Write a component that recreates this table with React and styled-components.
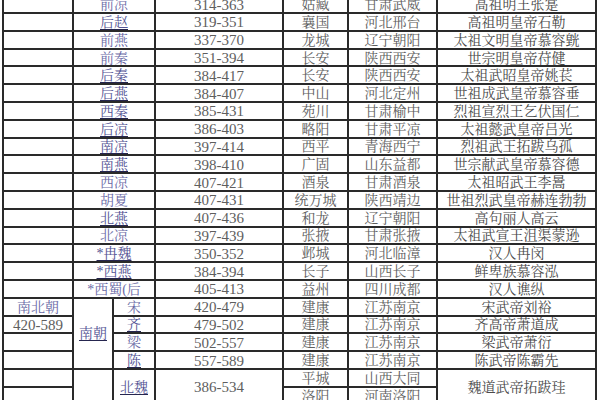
import React from "react";
import styled, { createGlobalStyle } from "styled-components";

const Global = createGlobalStyle`
  html, body { margin: 0; padding: 0; overflow: hidden; background: #fff; }
  body { width: 600px; height: 400px; }
`;

const Sheet = styled.div`
  display: grid;
  grid-template-columns: 70px 40px 42px 128px 65px 89px 159px;
  grid-auto-rows: 17.8px;
  margin: -3.8px 0 0 2px;
  width: max-content;
  border-left: 2px solid #2a2a2a;
  font-family: "Liberation Serif", "Noto Serif CJK SC", "Noto Sans CJK SC", serif;
  font-size: 14px;
`;

const Cell = styled.div`
  box-sizing: border-box;
  border-right: 2px solid #2a2a2a;
  border-bottom: 2px solid #2a2a2a;
  padding-top: 2px;
  display: flex;
  align-items: center;
  justify-content: center;
  white-space: nowrap;
  line-height: 1;
  color: ${(p) => (p.$tone === "dark" ? "#4a4a4a" : "#5e5e5e")};
  font-size: ${(p) => (p.$num ? "15px" : "14px")};
  grid-column: span ${(p) => p.$cols || 1};
  grid-row: span ${(p) => p.$rows || 1};
`;

const Name = styled.span`
  color: ${(p) => (p.$u ? "#545494" : "#6a6aa6")};
  text-decoration: ${(p) => (p.$u ? "underline" : "none")};
  text-decoration-color: #26264f;
  text-decoration-thickness: 1px;
  text-underline-offset: 2px;
`;

const kingdoms = [
  ["前凉", 0, "314-363", "姑臧", "甘肃武威", "高祖明王张寔"],
  ["后赵", 1, "319-351", "襄国", "河北邢台", "高祖明皇帝石勒"],
  ["前燕", 0, "337-370", "龙城", "辽宁朝阳", "太祖文明皇帝慕容皝"],
  ["前秦", 0, "351-394", "长安", "陕西西安", "世宗明皇帝苻健"],
  ["后秦", 1, "384-417", "长安", "陕西西安", "太祖武昭皇帝姚苌"],
  ["后燕", 1, "384-407", "中山", "河北定州", "世祖成武皇帝慕容垂"],
  ["西秦", 1, "385-431", "苑川", "甘肃榆中", "烈祖宣烈王乞伏国仁"],
  ["后凉", 1, "386-403", "略阳", "甘肃平凉", "太祖懿武皇帝吕光"],
  ["南凉", 1, "397-414", "西平", "青海西宁", "烈祖武王拓跋乌孤"],
  ["南燕", 1, "398-410", "广固", "山东益都", "世宗献武皇帝慕容德"],
  ["西凉", 0, "407-421", "酒泉", "甘肃酒泉", "太祖昭武王李暠"],
  ["胡夏", 0, "407-431", "统万城", "陕西靖边", "世祖烈武皇帝赫连勃勃"],
  ["北燕", 1, "407-436", "和龙", "辽宁朝阳", "高句丽人高云"],
  ["北凉", 0, "397-439", "张掖", "甘肃张掖", "太祖武宣王沮渠蒙逊"],
  ["*冉魏", 1, "350-352", "邺城", "河北临漳", "汉人冉闵"],
  ["*西燕", 1, "384-394", "长子", "山西长子", "鲜卑族慕容泓"],
  ["*西蜀(后", 0, "405-413", "益州", "四川成都", "汉人谯纵"],
];

const south = [
  ["宋", 0, "420-479", "宋武帝刘裕"],
  ["齐", 1, "479-502", "齐高帝萧道成"],
  ["梁", 0, "502-557", "梁武帝萧衍"],
  ["陈", 1, "557-589", "陈武帝陈霸先"],
];

export default function App() {
  const firstCol = [<Name key="a">南北朝</Name>, "420-589", "", ""];
  return (
    <>
      <Global />
      <Sheet>
        {kingdoms.map(([n, u, y, cap, place, founder]) => (
          <React.Fragment key={n}>
            <Cell />
            <Cell $cols={2}>
              <Name $u={u}>{n}</Name>
            </Cell>
            <Cell $num>{y}</Cell>
            <Cell>{cap}</Cell>
            <Cell>{place}</Cell>
            <Cell $tone="dark">{founder}</Cell>
          </React.Fragment>
        ))}
        {south.map(([n, u, y, founder], i) => (
          <React.Fragment key={n}>
            <Cell $num={i === 1}>{firstCol[i]}</Cell>
            {i === 0 && (
              <Cell $rows={4}>
                <Name $u>南朝</Name>
              </Cell>
            )}
            <Cell>
              <Name $u={u}>{n}</Name>
            </Cell>
            <Cell $num>{y}</Cell>
            <Cell>建康</Cell>
            <Cell>江苏南京</Cell>
            <Cell $tone="dark">{founder}</Cell>
          </React.Fragment>
        ))}
        <Cell />
        <Cell $rows={2} />
        <Cell $rows={2}>
          <Name $u>北魏</Name>
        </Cell>
        <Cell $rows={2} $num>386-534</Cell>
        <Cell>平城</Cell>
        <Cell>山西大同</Cell>
        <Cell $rows={2} $tone="dark">魏道武帝拓跋珪</Cell>
        <Cell />
        <Cell>洛阳</Cell>
        <Cell>河南洛阳</Cell>
      </Sheet>
    </>
  );
}
